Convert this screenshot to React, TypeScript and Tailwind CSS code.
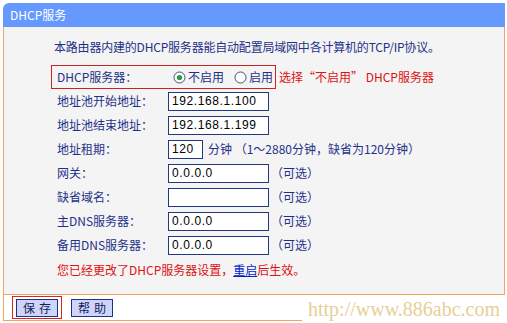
import React from "react";

const font = { fontFamily: '"Noto Sans CJK SC", "Liberation Sans", sans-serif' } as const;

function Radio({ checked }: { checked?: boolean }) {
  return (
    <svg width="13" height="13" viewBox="0 0 13 13" className="shrink-0">
      <circle cx="6.5" cy="6.5" r="5.5" fill="#ffffff" stroke="#3d4f7a" strokeWidth="1" />
      {checked && <circle cx="6.5" cy="6.5" r="2.6" fill="#2f9a3a" />}
    </svg>
  );
}

function Row({ label, children }: { label: string; children: React.ReactNode }) {
  return (
    <div className="flex h-[24px] items-center pl-[57px]">
      <div className="w-[111px] text-[12px] leading-[16px] text-[#1f3188]">{label}</div>
      {children}
    </div>
  );
}

function Input({ value, w }: { value: string; w: string }) {
  return (
    <div
      className={`${w} flex h-[19px] items-center border border-[#23397f] bg-white pl-[3px] text-[12px] leading-[14px] tracking-[0.6px] text-black`}
      style={{ fontFamily: '"Liberation Sans", sans-serif' }}
    >
      {value}
    </div>
  );
}

function Optional() {
  return <span className="ml-[2px] text-[12px] text-[#1f3188]">（可选）</span>;
}

export default function App() {
  return (
    <div className="relative h-[323px] w-[507px] overflow-hidden bg-white" style={font}>
      <div className="ml-[3px] w-[502px] pt-[3px]">
        <div className="flex h-[24px] items-center rounded-tl-[6px] bg-[#6699ff] pl-[7px] text-[12px] text-white">
          DHCP服务
        </div>
        <div className="h-[268px] border-x border-b border-[#eea65e] bg-[#f4f4f4] pt-[12px]">
          <div className="pl-[50px] text-[12px] leading-[16px] tracking-[-0.2px] text-[#1f3188]">
            本路由器内建的DHCP服务器能自动配置局域网中各计算机的TCP/IP协议。
          </div>
          <div className="mt-[10px] flex items-center pl-[47px]">
            <div className="flex h-[24px] w-[225px] items-center border border-[#cc2222] pl-[5px]">
              <div className="w-[116px] text-[12px] text-[#1f3188]">DHCP服务器：</div>
              <Radio checked />
              <span className="ml-[2px] text-[12px] text-[#1f3188]">不启用</span>
              <span className="ml-[10px]" />
              <Radio />
              <span className="ml-[2px] text-[12px] text-[#1f3188]">启用</span>
            </div>
            <span className="ml-[3px] text-[12px] text-[#dd1111]">选择“不启用” DHCP服务器</span>
          </div>
          <div className="-ml-[4px]">
            <Row label="地址池开始地址：">
              <Input value="192.168.1.100" w="w-[101px]" />
            </Row>
            <Row label="地址池结束地址：">
              <Input value="192.168.1.199" w="w-[101px]" />
            </Row>
            <Row label="地址租期：">
              <Input value="120" w="w-[35px]" />
              <span className="ml-[5px] text-[12px] text-[#1f3188]">分钟 （1～2880分钟，缺省为120分钟）</span>
            </Row>
            <Row label="网关：">
              <Input value="0.0.0.0" w="w-[101px]" />
              <Optional />
            </Row>
            <Row label="缺省域名：">
              <Input value="" w="w-[101px]" />
              <Optional />
            </Row>
            <Row label="主DNS服务器：">
              <Input value="0.0.0.0" w="w-[101px]" />
              <Optional />
            </Row>
            <Row label="备用DNS服务器：">
              <Input value="0.0.0.0" w="w-[101px]" />
              <Optional />
            </Row>
            <div className="mt-[1px] flex h-[24px] items-center pl-[57px] text-[12px] text-[#dd1111]">
              您已经更改了DHCP服务器设置，
              <span className="text-[#0022cc] underline">重启</span>
              后生效。
            </div>
          </div>
        </div>
        <div className="flex h-[26px] items-center border-b border-l border-[#eea65e] pl-[8px]">
          <div className="flex h-[23px] w-[50px] items-center justify-center border border-[#dd2222]">
            <div className="flex h-[18px] w-[42px] items-center justify-center border border-[#1e3480] bg-[#cdd5fb] text-[12px] tracking-[4px] text-[#16205a]">
              <span className="ml-[4px]">保存</span>
            </div>
          </div>
          <div className="ml-[9px] flex h-[18px] w-[42px] items-center justify-center border border-[#1e3480] bg-[#cdd5fb] text-[12px] tracking-[4px] text-[#16205a]">
            <span className="ml-[4px]">帮助</span>
          </div>
        </div>
      </div>
      <div
        className="absolute bottom-0 right-[1px] flex h-[25px] w-[204px] items-start justify-center whitespace-nowrap bg-white text-[20px] leading-[22px] text-[#e8cf96]"
        style={{ fontFamily: '"Liberation Serif", serif' }}
      >
        http://www.886abc.com
      </div>
    </div>
  );
}
